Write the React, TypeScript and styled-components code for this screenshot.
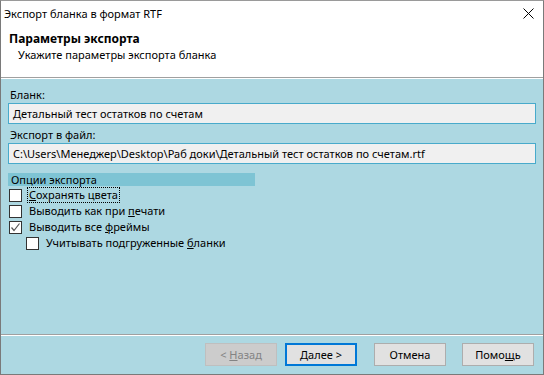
import React from "react";
import styled, { createGlobalStyle } from "styled-components";

const Global = createGlobalStyle`
  html, body { margin: 0; padding: 0; background: #ffffff; }
  body { font-family: "Noto Sans", "Liberation Sans", sans-serif; font-size: 11px; color: #000; }
  * { box-sizing: border-box; }
`;

const Window = styled.div`
  width: 544px;
  height: 375px;
  border: 1px solid #7a7a7a;
  border-top-color: #9a9a9a;
  display: flex;
  flex-direction: column;
  background: #ffffff;
  overflow: hidden;
`;

const TitleBar = styled.div`
  height: 29px;
  display: flex;
  align-items: center;
  justify-content: space-between;
  padding: 0 0 0 3px;
  background: #ffffff;
`;

const TitleText = styled.span`
  line-height: 16px;
  margin-top: -3px;
`;

const CloseBtn = styled.div`
  width: 30px;
  height: 29px;
  display: flex;
  align-items: center;
  justify-content: center;
  margin-top: -4px;
`;

const Header = styled.div`
  height: 47px;
  padding: 1px 0 0 8px;
  background: #ffffff;
  display: flex;
  flex-direction: column;
`;

const HeaderTitle = styled.div`
  font-weight: bold;
  font-size: 12px;
  line-height: 16px;
`;

const HeaderSub = styled.div`
  line-height: 16px;
  padding-left: 9px;
`;

const Rule = styled.div`
  height: 2px;
  border-top: 1px solid #a0a0a0;
  border-bottom: 1px solid #ffffff;
  flex: none;
`;

const Body = styled.div`
  flex: 1;
  background: #add8e2;
  display: flex;
  flex-direction: column;
`;

const Content = styled.div`
  flex: 1;
  padding: 8px 7px 0 7px;
  display: flex;
  flex-direction: column;
`;

const Label = styled.div`
  line-height: 16px;
  padding-left: 2px;
`;

const Field = styled.div`
  height: 21px;
  margin: 0 0 3px 0;
  background: #f0f0f0;
  border: 1px solid #48aacb;
  display: flex;
  align-items: center;
  padding-left: 4px;
  white-space: nowrap;
  overflow: hidden;
`;

const GroupHeader = styled.div`
  width: 247px;
  height: 13px;
  margin-top: 6px;
  background: #7ec4d4;
  line-height: 13px;
  padding-left: 3px;
`;

const Options = styled.div`
  display: flex;
  flex-direction: column;
  padding-top: 1px;
`;

const Row = styled.label<{ $indent?: boolean }>`
  display: flex;
  align-items: center;
  height: 16px;
  padding-left: ${(p) => (p.$indent ? 18 : 1)}px;
  gap: 6px;
`;

const Box = styled.span`
  width: 13px;
  height: 13px;
  background: #ffffff;
  border: 1px solid #333333;
  display: flex;
  align-items: center;
  justify-content: center;
  flex: none;
`;

const RowText = styled.span<{ $focus?: boolean }>`
  line-height: 14px;
  padding: 0 1px;
  outline: ${(p) => (p.$focus ? "1px dotted #000" : "none")};
`;

const U = styled.span`
  text-decoration: underline;
`;

const Footer = styled.div`
  height: 38px;
  display: flex;
  align-items: flex-start;
  justify-content: flex-end;
  padding: 7px 9px 0 0;
`;

const Button = styled.div<{ $variant?: "default" | "disabled"; $gap?: number }>`
  width: 72px;
  height: 23px;
  margin-left: ${(p) => p.$gap ?? 0}px;
  display: flex;
  align-items: center;
  justify-content: center;
  white-space: pre;
  background: ${(p) => (p.$variant === "disabled" ? "#cccccc" : "#e1e1e1")};
  border: ${(p) =>
    p.$variant === "default" ? "2px solid #0078d7" : p.$variant === "disabled" ? "1px solid #bfbfbf" : "1px solid #adadad"};
  color: ${(p) => (p.$variant === "disabled" ? "#838383" : "#000")};
`;

const Check = () => (
  <svg width="11" height="11" viewBox="0 0 11 11">
    <path d="M1.5 5.5 L4 8.5 L9.5 1.5" fill="none" stroke="#555" strokeWidth="1.2" />
  </svg>
);

export default function App() {
  return (
    <>
      <Global />
      <Window>
        <TitleBar>
          <TitleText>Экспорт бланка в формат RTF</TitleText>
          <CloseBtn>
            <svg width="11" height="11" viewBox="0 0 11 11">
              <path d="M0.5 0.5 L10.5 10.5 M10.5 0.5 L0.5 10.5" stroke="#000" strokeWidth="1" />
            </svg>
          </CloseBtn>
        </TitleBar>
        <Header>
          <HeaderTitle>Параметры экспорта</HeaderTitle>
          <HeaderSub>Укажите параметры экспорта бланка</HeaderSub>
        </Header>
        <Rule />
        <Body>
          <Content>
            <Label>Бланк:</Label>
            <Field>Детальный тест остатков по счетам</Field>
            <Label>Экспорт в файл:</Label>
            <Field>C:\Users\Менеджер\Desktop\Раб доки\Детальный тест остатков по счетам.rtf</Field>
            <GroupHeader>Опции экспорта</GroupHeader>
            <Options>
              <Row>
                <Box />
                <RowText $focus>
                  <U>С</U>охранять цвета
                </RowText>
              </Row>
              <Row>
                <Box />
                <RowText>
                  Выводить как при <U>п</U>ечати
                </RowText>
              </Row>
              <Row>
                <Box>
                  <Check />
                </Box>
                <RowText>
                  Выводить все <U>ф</U>реймы
                </RowText>
              </Row>
              <Row $indent>
                <Box />
                <RowText>
                  Учитывать подгруженные <U>б</U>ланки
                </RowText>
              </Row>
            </Options>
          </Content>
          <Rule />
          <Footer>
            <Button $variant="disabled">
              {"< "}
              <U>Н</U>азад
            </Button>
            <Button $variant="default" $gap={8}>
              <U>Д</U>
              {"алее >"}
            </Button>
            <Button $gap={17}>Отмена</Button>
            <Button $gap={16}>
              Помо<U>щ</U>ь
            </Button>
          </Footer>
        </Body>
      </Window>
    </>
  );
}
